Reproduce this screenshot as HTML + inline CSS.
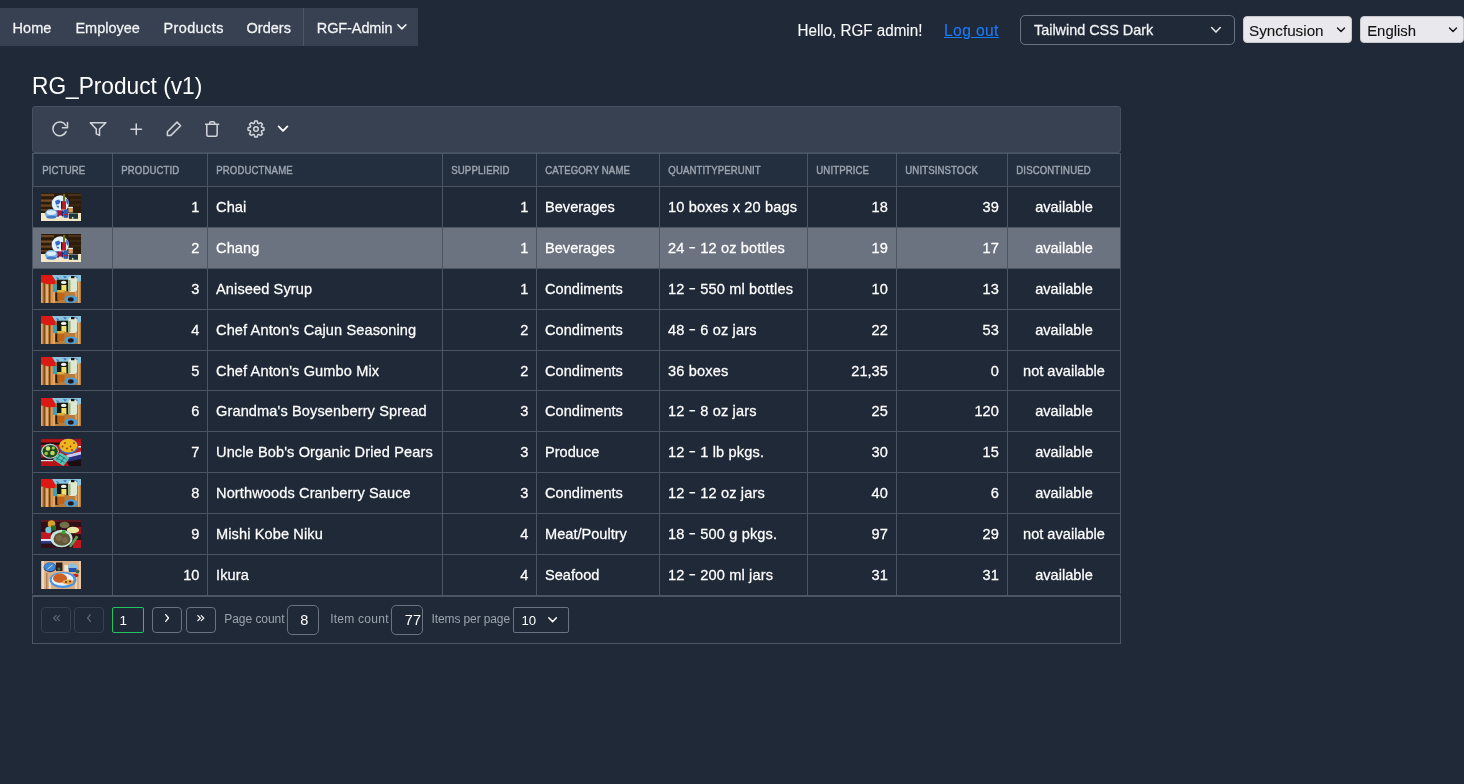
<!DOCTYPE html>
<html><head><meta charset="utf-8"><title>RG_Product</title>
<style>
html,body{margin:0;padding:0;}
body{width:1464px;height:784px;overflow:hidden;position:relative;background:#1f2937;font-family:'Liberation Sans', sans-serif;}
.t{-webkit-text-stroke:0.25px currentColor;}
.ns{-webkit-text-stroke:0;}
#root{position:absolute;left:0;top:0;width:1464px;height:784px;will-change:transform;}
</style></head><body>
<div id="root">
<div style="position:absolute;left:0px;top:8px;width:418px;height:38px;background:#374151;"></div>
<div style="position:absolute;left:303px;top:8px;width:1px;height:38px;background:#4b5563;"></div>
<div class="t" style="position:absolute;top:19.88px;font-family:'Liberation Sans', sans-serif;font-size:14.5px;color:#f3f4f6;font-weight:400;letter-spacing:0px;white-space:nowrap;line-height:16.197px;transform:scaleY(1.06);transform-origin:0 13.12px;left:12.6px;">Home</div>
<div class="t" style="position:absolute;top:19.88px;font-family:'Liberation Sans', sans-serif;font-size:14.5px;color:#f3f4f6;font-weight:400;letter-spacing:0px;white-space:nowrap;line-height:16.197px;transform:scaleY(1.06);transform-origin:0 13.12px;left:75.4px;">Employee</div>
<div class="t" style="position:absolute;top:19.88px;font-family:'Liberation Sans', sans-serif;font-size:14.5px;color:#f3f4f6;font-weight:400;letter-spacing:0.4px;white-space:nowrap;line-height:16.197px;transform:scaleY(1.06);transform-origin:0 13.12px;left:163.4px;">Products</div>
<div class="t" style="position:absolute;top:19.88px;font-family:'Liberation Sans', sans-serif;font-size:14.5px;color:#f3f4f6;font-weight:400;letter-spacing:0px;white-space:nowrap;line-height:16.197px;transform:scaleY(1.06);transform-origin:0 13.12px;left:246.6px;">Orders</div>
<div class="t" style="position:absolute;top:19.88px;font-family:'Liberation Sans', sans-serif;font-size:14.5px;color:#f3f4f6;font-weight:400;letter-spacing:-0.1px;white-space:nowrap;line-height:16.197px;transform:scaleY(1.06);transform-origin:0 13.12px;left:316.8px;">RGF-Admin</div>
<svg style="position:absolute;left:396.3px;top:22px;" width="12" height="10" viewBox="0 0 12 10"><path d="M1.9 2.8 L5.9 6.9 L9.9 2.8" fill="none" stroke="#f3f4f6" stroke-width="1.6" stroke-linecap="round" stroke-linejoin="round"/></svg>
<div class="t" style="position:absolute;top:22.04px;font-family:'Liberation Sans', sans-serif;font-size:15.2px;color:#f9fafb;font-weight:400;letter-spacing:0px;white-space:nowrap;line-height:16.978px;-webkit-text-stroke:0.1px currentColor;transform:scaleY(1.04);transform-origin:0 13.76px;left:797.5px;">Hello, RGF admin!</div>
<div class="t" style="position:absolute;top:22.38px;font-family:'Liberation Sans', sans-serif;font-size:15.6px;color:#1a7bff;font-weight:400;letter-spacing:0.4px;white-space:nowrap;line-height:17.425px;text-decoration:underline;text-underline-offset:1.2px;-webkit-text-stroke:0.1px currentColor;left:944px;">Log out</div>
<div style="position:absolute;left:1020px;top:15px;width:215px;height:30px;background:#1f2937;box-sizing:border-box;border:1px solid #6b7280;border-radius:5px;"></div>
<div class="t" style="position:absolute;top:21.97px;font-family:'Liberation Sans', sans-serif;font-size:14.4px;color:#f3f4f6;font-weight:400;letter-spacing:0px;white-space:nowrap;line-height:16.085px;transform:scaleY(1.04);transform-origin:0 13.03px;left:1034px;">Tailwind CSS Dark</div>
<svg style="position:absolute;left:1209px;top:24px;" width="14" height="12" viewBox="0 0 14 12"><path d="M2.6 3.6 L6.95 8.1 L11.3 3.6" fill="none" stroke="#e5e7eb" stroke-width="1.5" stroke-linecap="round" stroke-linejoin="round"/></svg>
<div style="position:absolute;left:1243px;top:16px;width:109px;height:27px;background:#e9e9ed;box-sizing:border-box;border:1px solid #c8c8cc;border-radius:4px;"></div>
<div class="t" style="position:absolute;top:21.80px;font-family:'Liberation Sans', sans-serif;font-size:15.25px;color:#111;font-weight:400;letter-spacing:0px;white-space:nowrap;line-height:17.034px;-webkit-text-stroke:0.1px currentColor;left:1249px;">Syncfusion</div>
<svg style="position:absolute;left:1336px;top:26px;" width="10" height="8" viewBox="0 0 10 8"><path d="M1.5 2 L5 5.5 L8.5 2" fill="none" stroke="#111" stroke-width="1.4" stroke-linecap="round" stroke-linejoin="round"/></svg>
<div style="position:absolute;left:1360px;top:16px;width:104px;height:27px;background:#e9e9ed;box-sizing:border-box;border:1px solid #c8c8cc;border-radius:4px;"></div>
<div class="t" style="position:absolute;top:22.72px;font-family:'Liberation Sans', sans-serif;font-size:14.9px;color:#111;font-weight:400;letter-spacing:0px;white-space:nowrap;line-height:16.643px;-webkit-text-stroke:0.1px currentColor;transform:scaleY(1.04);transform-origin:0 13.48px;left:1367.2px;">English</div>
<svg style="position:absolute;left:1448px;top:26px;" width="10" height="8" viewBox="0 0 10 8"><path d="M1.5 2 L5 5.5 L8.5 2" fill="none" stroke="#111" stroke-width="1.4" stroke-linecap="round" stroke-linejoin="round"/></svg>
<div class="t" style="position:absolute;top:74.36px;font-family:'Liberation Sans', sans-serif;font-size:22.7px;color:#ffffff;font-weight:400;letter-spacing:0px;white-space:nowrap;line-height:25.356px;transform:scaleY(1.05);transform-origin:0 20.54px;-webkit-text-stroke:0;left:32.0px;">RG_Product (v1)</div>
<div style="position:absolute;left:32px;top:106px;width:1089px;height:47px;background:#374151;box-sizing:border-box;border:1px solid #465061;border-radius:3px;"></div>
<svg style="position:absolute;left:48px;top:118px;" width="24" height="22" viewBox="0 0 24 22"><path d="M18.1 13.6 A6.9 6.9 0 1 1 17.9 7.6" fill="none" stroke="#d1d5db" stroke-width="1.5" stroke-linecap="round" stroke-linejoin="round"/><path d="M19.5 4.5 L19.5 9.7 L14.4 9.7" fill="none" stroke="#d1d5db" stroke-width="1.5" stroke-linecap="round" stroke-linejoin="round"/></svg>
<svg style="position:absolute;left:86px;top:117px;" width="24" height="24" viewBox="0 0 24 24"><path d="M4.3 5.7 L19.9 5.7 L13.5 12 L13.5 18.4 L10.25 16.8 L10.25 12 Z" fill="none" stroke="#d1d5db" stroke-width="1.5" stroke-linecap="round" stroke-linejoin="round"/></svg>
<svg style="position:absolute;left:129px;top:122px;" width="14" height="14" viewBox="0 0 14 14"><path d="M7.25 1.9 L7.25 12.4 M2 7.15 L12.5 7.15" fill="none" stroke="#d1d5db" stroke-width="1.5" stroke-linecap="round" stroke-linejoin="round"/></svg>
<svg style="position:absolute;left:162px;top:117px;" width="24" height="24" viewBox="0 0 24 24"><path d="M5.4 18.4 L5.4 14.7 L15.0 5.1 L18.6 8.7 L8.9 18.4 Z" fill="none" stroke="#d1d5db" stroke-width="1.5" stroke-linecap="round" stroke-linejoin="round"/></svg>
<svg style="position:absolute;left:203px;top:119px;" width="18" height="20" viewBox="0 0 18 20"><path d="M2.6 5.3 L15.7 5.3 M6.7 5.3 L6.7 4.0 Q6.7 2.75 7.95 2.75 L10.4 2.75 Q11.65 2.75 11.65 4.0 L11.65 5.3 M3.8 5.3 L3.8 15.8 Q3.8 17.25 5.25 17.25 L12.7 17.25 Q14.15 17.25 14.15 15.8 L14.15 5.3" fill="none" stroke="#d1d5db" stroke-width="1.5" stroke-linecap="round" stroke-linejoin="round"/></svg>
<svg style="position:absolute;left:244px;top:117px;" width="24" height="24" viewBox="0 0 24 24"><path d="M10.25 6.26 L10.75 4.10 A8.0 8.0 0 0 1 13.25 4.10 L13.75 6.26 A6.0 6.0 0 0 1 14.82 6.70 L16.70 5.53 A8.0 8.0 0 0 1 18.47 7.30 L17.30 9.18 A6.0 6.0 0 0 1 17.74 10.25 L19.90 10.75 A8.0 8.0 0 0 1 19.90 13.25 L17.74 13.75 A6.0 6.0 0 0 1 17.30 14.82 L18.47 16.70 A8.0 8.0 0 0 1 16.70 18.47 L14.82 17.30 A6.0 6.0 0 0 1 13.75 17.74 L13.25 19.90 A8.0 8.0 0 0 1 10.75 19.90 L10.25 17.74 A6.0 6.0 0 0 1 9.18 17.30 L7.30 18.47 A8.0 8.0 0 0 1 5.53 16.70 L6.70 14.82 A6.0 6.0 0 0 1 6.26 13.75 L4.10 13.25 A8.0 8.0 0 0 1 4.10 10.75 L6.26 10.25 A6.0 6.0 0 0 1 6.70 9.18 L5.53 7.30 A8.0 8.0 0 0 1 7.30 5.53 L9.18 6.70 A6.0 6.0 0 0 1 10.25 6.26 Z" fill="none" stroke="#d1d5db" stroke-width="1.5" stroke-linecap="round" stroke-linejoin="round"/><circle cx="12" cy="12" r="2.3" fill="none" stroke="#d1d5db" stroke-width="1.5" stroke-linecap="round" stroke-linejoin="round"/></svg>
<svg style="position:absolute;left:276px;top:123px;" width="14" height="12" viewBox="0 0 14 12"><path d="M2.6 3.4 L7 7.8 L11.4 3.4" fill="none" stroke="#ffffff" stroke-width="1.8" stroke-linecap="round" stroke-linejoin="round"/></svg>
<div style="position:absolute;left:33px;top:153px;width:1088px;height:33px;background:#232e3e;"></div>
<div style="position:absolute;left:33px;top:187px;width:1088px;height:40px;background:#1f2937;"></div>
<div style="position:absolute;left:33px;top:228px;width:1088px;height:40px;background:#6b7280;"></div>
<div style="position:absolute;left:33px;top:269px;width:1088px;height:40px;background:#1f2937;"></div>
<div style="position:absolute;left:33px;top:310px;width:1088px;height:40px;background:#1f2937;"></div>
<div style="position:absolute;left:33px;top:351px;width:1088px;height:39px;background:#1f2937;"></div>
<div style="position:absolute;left:33px;top:391px;width:1088px;height:40px;background:#1f2937;"></div>
<div style="position:absolute;left:33px;top:432px;width:1088px;height:40px;background:#1f2937;"></div>
<div style="position:absolute;left:33px;top:473px;width:1088px;height:40px;background:#1f2937;"></div>
<div style="position:absolute;left:33px;top:514px;width:1088px;height:40px;background:#1f2937;"></div>
<div style="position:absolute;left:33px;top:555px;width:1088px;height:40px;background:#1f2937;"></div>
<div style="position:absolute;left:33px;top:596px;width:1088px;height:48px;background:#1f2937;"></div>
<div style="position:absolute;left:32px;top:153px;width:1089px;height:1px;background:#4b5563;"></div>
<div style="position:absolute;left:32px;top:186px;width:1089px;height:1px;background:#4b5563;"></div>
<div style="position:absolute;left:32px;top:227px;width:1089px;height:1px;background:#4b5563;"></div>
<div style="position:absolute;left:32px;top:268px;width:1089px;height:1px;background:#4b5563;"></div>
<div style="position:absolute;left:32px;top:309px;width:1089px;height:1px;background:#4b5563;"></div>
<div style="position:absolute;left:32px;top:350px;width:1089px;height:1px;background:#4b5563;"></div>
<div style="position:absolute;left:32px;top:390px;width:1089px;height:1px;background:#4b5563;"></div>
<div style="position:absolute;left:32px;top:431px;width:1089px;height:1px;background:#4b5563;"></div>
<div style="position:absolute;left:32px;top:472px;width:1089px;height:1px;background:#4b5563;"></div>
<div style="position:absolute;left:32px;top:513px;width:1089px;height:1px;background:#4b5563;"></div>
<div style="position:absolute;left:32px;top:554px;width:1089px;height:1px;background:#4b5563;"></div>
<div style="position:absolute;left:32px;top:595px;width:1089px;height:2px;background:#4b5563;"></div>
<div style="position:absolute;left:32px;top:643px;width:1089px;height:1px;background:#4b5563;"></div>
<div style="position:absolute;left:32px;top:153px;width:1px;height:441px;background:#4b5563;"></div>
<div style="position:absolute;left:33px;top:154px;width:1px;height:32px;background:rgba(75,85,99,0.5);"></div>
<div style="position:absolute;left:32px;top:597px;width:1px;height:46px;background:#4b5563;"></div>
<div style="position:absolute;left:112px;top:153px;width:1px;height:443px;background:#4b5563;"></div>
<div style="position:absolute;left:207px;top:153px;width:1px;height:443px;background:#4b5563;"></div>
<div style="position:absolute;left:442px;top:153px;width:1px;height:443px;background:#4b5563;"></div>
<div style="position:absolute;left:536px;top:153px;width:1px;height:443px;background:#4b5563;"></div>
<div style="position:absolute;left:659px;top:153px;width:1px;height:443px;background:#4b5563;"></div>
<div style="position:absolute;left:807px;top:153px;width:1px;height:443px;background:#4b5563;"></div>
<div style="position:absolute;left:896px;top:153px;width:1px;height:443px;background:#4b5563;"></div>
<div style="position:absolute;left:1007px;top:153px;width:1px;height:443px;background:#4b5563;"></div>
<div style="position:absolute;left:1120px;top:153px;width:1px;height:441px;background:#4b5563;"></div>
<div style="position:absolute;left:1120px;top:597px;width:1px;height:46px;background:#4b5563;"></div>
<div class="t" style="position:absolute;top:165.91px;font-family:'Liberation Sans', sans-serif;font-size:9.6px;color:#9ca3af;font-weight:400;letter-spacing:0.12px;white-space:nowrap;line-height:10.723px;-webkit-text-stroke:0.4px currentColor;transform:scaleY(1.12);transform-origin:0 8.69px;left:42.3px;">PICTURE</div>
<div class="t" style="position:absolute;top:165.91px;font-family:'Liberation Sans', sans-serif;font-size:9.6px;color:#9ca3af;font-weight:400;letter-spacing:0.12px;white-space:nowrap;line-height:10.723px;-webkit-text-stroke:0.4px currentColor;transform:scaleY(1.12);transform-origin:0 8.69px;left:121.3px;">PRODUCTID</div>
<div class="t" style="position:absolute;top:165.91px;font-family:'Liberation Sans', sans-serif;font-size:9.6px;color:#9ca3af;font-weight:400;letter-spacing:0.12px;white-space:nowrap;line-height:10.723px;-webkit-text-stroke:0.4px currentColor;transform:scaleY(1.12);transform-origin:0 8.69px;left:216.3px;">PRODUCTNAME</div>
<div class="t" style="position:absolute;top:165.91px;font-family:'Liberation Sans', sans-serif;font-size:9.6px;color:#9ca3af;font-weight:400;letter-spacing:0.12px;white-space:nowrap;line-height:10.723px;-webkit-text-stroke:0.4px currentColor;transform:scaleY(1.12);transform-origin:0 8.69px;left:451.3px;">SUPPLIERID</div>
<div class="t" style="position:absolute;top:165.91px;font-family:'Liberation Sans', sans-serif;font-size:9.6px;color:#9ca3af;font-weight:400;letter-spacing:0.12px;white-space:nowrap;line-height:10.723px;-webkit-text-stroke:0.4px currentColor;transform:scaleY(1.12);transform-origin:0 8.69px;left:545.3px;">CATEGORY NAME</div>
<div class="t" style="position:absolute;top:165.91px;font-family:'Liberation Sans', sans-serif;font-size:9.6px;color:#9ca3af;font-weight:400;letter-spacing:0.12px;white-space:nowrap;line-height:10.723px;-webkit-text-stroke:0.4px currentColor;transform:scaleY(1.12);transform-origin:0 8.69px;left:668.3px;">QUANTITYPERUNIT</div>
<div class="t" style="position:absolute;top:165.91px;font-family:'Liberation Sans', sans-serif;font-size:9.6px;color:#9ca3af;font-weight:400;letter-spacing:0.12px;white-space:nowrap;line-height:10.723px;-webkit-text-stroke:0.4px currentColor;transform:scaleY(1.12);transform-origin:0 8.69px;left:816.3px;">UNITPRICE</div>
<div class="t" style="position:absolute;top:165.91px;font-family:'Liberation Sans', sans-serif;font-size:9.6px;color:#9ca3af;font-weight:400;letter-spacing:0.12px;white-space:nowrap;line-height:10.723px;-webkit-text-stroke:0.4px currentColor;transform:scaleY(1.12);transform-origin:0 8.69px;left:905.3px;">UNITSINSTOCK</div>
<div class="t" style="position:absolute;top:165.91px;font-family:'Liberation Sans', sans-serif;font-size:9.6px;color:#9ca3af;font-weight:400;letter-spacing:0.12px;white-space:nowrap;line-height:10.723px;-webkit-text-stroke:0.4px currentColor;transform:scaleY(1.12);transform-origin:0 8.69px;left:1016.3px;">DISCONTINUED</div>
<svg style="position:absolute;left:41px;top:193px;filter:blur(0.35px);" width="40" height="28" viewBox="0 0 40 28"><rect width="40" height="28" fill="#2c1c0c"/>
<rect y="1" width="13" height="2.2" fill="#6a4620"/><rect y="6.5" width="12" height="2.2" fill="#74502a"/><rect y="11.5" width="11" height="2.2" fill="#6a4620"/><rect y="16" width="9" height="2" fill="#5a3a18"/>
<rect x="27" y="1" width="13" height="2" fill="#4a3218"/><rect x="29" y="6" width="11" height="1.8" fill="#3a2a14"/><rect x="30" y="11" width="10" height="1.8" fill="#3a2812"/>
<rect y="20" width="40" height="8" fill="#f2e8c8"/>
<circle cx="19.3" cy="10.8" r="8.6" fill="#e2f2f8"/>
<path d="M14 8 l3.5 -1.4 l2.2 1.6 l-1.6 2.8 l-3 0.8 z M15 12.5 l3.2 0.4 l-1 2.4 z M25 5.5 l2.8 2.8 l-0.6 3.6 l-1.8 -2z" fill="#3668cc"/>
<rect x="22" y="0.9" width="2.2" height="8.2" fill="#6c7424"/>
<rect x="20" y="8.2" width="5" height="8.4" fill="#c01c28"/><rect x="20" y="8.2" width="1.3" height="7" fill="#2a2018"/>
<rect x="27.3" y="13.9" width="4.6" height="5.6" fill="#cc9c5c"/><rect x="27.3" y="13.9" width="4.6" height="1.1" fill="#e8f2f2"/>
<rect x="14" y="17.4" width="4" height="6.2" fill="#2434a0"/><rect x="17" y="17.4" width="4" height="5.2" fill="#ac1630"/><rect x="20.8" y="17.4" width="1.8" height="6" fill="#1a2a78"/>
<rect x="22.7" y="16.6" width="4.6" height="8.2" fill="#2c5cb0"/><rect x="22.7" y="21" width="4.6" height="1.2" fill="#b02030"/>
<ellipse cx="10.3" cy="20.8" rx="6.4" ry="4.8" fill="#78b0e4"/><ellipse cx="10.3" cy="19.6" rx="4.8" ry="2.4" fill="#dcecf6"/><ellipse cx="10.3" cy="24" rx="5" ry="1.6" fill="#4678c4"/>
<rect x="28" y="20.4" width="9" height="5.4" fill="#1c3640"/><rect x="31" y="23.9" width="1.4" height="1.9" fill="#e4d888"/></svg>
<div class="t" style="position:absolute;top:199.19px;font-family:'Liberation Sans', sans-serif;font-size:14.6px;color:#ffffff;font-weight:400;letter-spacing:0px;white-space:nowrap;line-height:16.308px;transform:scaleY(1.05);transform-origin:0 13.21px;right:1264.6px;text-align:right;">1</div>
<div class="t" style="position:absolute;top:199.19px;font-family:'Liberation Sans', sans-serif;font-size:14.6px;color:#ffffff;font-weight:400;letter-spacing:0.1px;white-space:nowrap;line-height:16.308px;transform:scaleY(1.05);transform-origin:0 13.21px;left:216px;">Chai</div>
<div class="t" style="position:absolute;top:199.19px;font-family:'Liberation Sans', sans-serif;font-size:14.6px;color:#ffffff;font-weight:400;letter-spacing:0px;white-space:nowrap;line-height:16.308px;transform:scaleY(1.05);transform-origin:0 13.21px;right:935.6px;text-align:right;">1</div>
<div class="t" style="position:absolute;top:199.19px;font-family:'Liberation Sans', sans-serif;font-size:14.6px;color:#ffffff;font-weight:400;letter-spacing:0px;white-space:nowrap;line-height:16.308px;transform:scaleY(1.05);transform-origin:0 13.21px;left:545px;">Beverages</div>
<div class="t" style="position:absolute;top:199.19px;font-family:'Liberation Sans', sans-serif;font-size:14.6px;color:#ffffff;font-weight:400;letter-spacing:0.15px;white-space:nowrap;line-height:16.308px;transform:scaleY(1.05);transform-origin:0 13.21px;left:668px;">10 boxes x 20 bags</div>
<div class="t" style="position:absolute;top:199.19px;font-family:'Liberation Sans', sans-serif;font-size:14.6px;color:#ffffff;font-weight:400;letter-spacing:0px;white-space:nowrap;line-height:16.308px;transform:scaleY(1.05);transform-origin:0 13.21px;right:576.2px;text-align:right;">18</div>
<div class="t" style="position:absolute;top:199.19px;font-family:'Liberation Sans', sans-serif;font-size:14.6px;color:#ffffff;font-weight:400;letter-spacing:0px;white-space:nowrap;line-height:16.308px;transform:scaleY(1.05);transform-origin:0 13.21px;right:465.20000000000005px;text-align:right;">39</div>
<div class="t" style="position:absolute;top:199.19px;font-family:'Liberation Sans', sans-serif;font-size:14.6px;color:#ffffff;font-weight:400;letter-spacing:0px;white-space:nowrap;line-height:16.308px;transform:scaleY(1.05);transform-origin:0 13.21px;left:764.0px;width:600px;text-align:center;">available</div>
<svg style="position:absolute;left:41px;top:234px;filter:blur(0.35px);" width="40" height="28" viewBox="0 0 40 28"><rect width="40" height="28" fill="#2c1c0c"/>
<rect y="1" width="13" height="2.2" fill="#6a4620"/><rect y="6.5" width="12" height="2.2" fill="#74502a"/><rect y="11.5" width="11" height="2.2" fill="#6a4620"/><rect y="16" width="9" height="2" fill="#5a3a18"/>
<rect x="27" y="1" width="13" height="2" fill="#4a3218"/><rect x="29" y="6" width="11" height="1.8" fill="#3a2a14"/><rect x="30" y="11" width="10" height="1.8" fill="#3a2812"/>
<rect y="20" width="40" height="8" fill="#f2e8c8"/>
<circle cx="19.3" cy="10.8" r="8.6" fill="#e2f2f8"/>
<path d="M14 8 l3.5 -1.4 l2.2 1.6 l-1.6 2.8 l-3 0.8 z M15 12.5 l3.2 0.4 l-1 2.4 z M25 5.5 l2.8 2.8 l-0.6 3.6 l-1.8 -2z" fill="#3668cc"/>
<rect x="22" y="0.9" width="2.2" height="8.2" fill="#6c7424"/>
<rect x="20" y="8.2" width="5" height="8.4" fill="#c01c28"/><rect x="20" y="8.2" width="1.3" height="7" fill="#2a2018"/>
<rect x="27.3" y="13.9" width="4.6" height="5.6" fill="#cc9c5c"/><rect x="27.3" y="13.9" width="4.6" height="1.1" fill="#e8f2f2"/>
<rect x="14" y="17.4" width="4" height="6.2" fill="#2434a0"/><rect x="17" y="17.4" width="4" height="5.2" fill="#ac1630"/><rect x="20.8" y="17.4" width="1.8" height="6" fill="#1a2a78"/>
<rect x="22.7" y="16.6" width="4.6" height="8.2" fill="#2c5cb0"/><rect x="22.7" y="21" width="4.6" height="1.2" fill="#b02030"/>
<ellipse cx="10.3" cy="20.8" rx="6.4" ry="4.8" fill="#78b0e4"/><ellipse cx="10.3" cy="19.6" rx="4.8" ry="2.4" fill="#dcecf6"/><ellipse cx="10.3" cy="24" rx="5" ry="1.6" fill="#4678c4"/>
<rect x="28" y="20.4" width="9" height="5.4" fill="#1c3640"/><rect x="31" y="23.9" width="1.4" height="1.9" fill="#e4d888"/></svg>
<div class="t" style="position:absolute;top:240.05px;font-family:'Liberation Sans', sans-serif;font-size:14.6px;color:#ffffff;font-weight:400;letter-spacing:0px;white-space:nowrap;line-height:16.308px;transform:scaleY(1.05);transform-origin:0 13.21px;right:1264.6px;text-align:right;">2</div>
<div class="t" style="position:absolute;top:240.05px;font-family:'Liberation Sans', sans-serif;font-size:14.6px;color:#ffffff;font-weight:400;letter-spacing:0.1px;white-space:nowrap;line-height:16.308px;transform:scaleY(1.05);transform-origin:0 13.21px;left:216px;">Chang</div>
<div class="t" style="position:absolute;top:240.05px;font-family:'Liberation Sans', sans-serif;font-size:14.6px;color:#ffffff;font-weight:400;letter-spacing:0px;white-space:nowrap;line-height:16.308px;transform:scaleY(1.05);transform-origin:0 13.21px;right:935.6px;text-align:right;">1</div>
<div class="t" style="position:absolute;top:240.05px;font-family:'Liberation Sans', sans-serif;font-size:14.6px;color:#ffffff;font-weight:400;letter-spacing:0px;white-space:nowrap;line-height:16.308px;transform:scaleY(1.05);transform-origin:0 13.21px;left:545px;">Beverages</div>
<div class="t" style="position:absolute;top:240.05px;font-family:'Liberation Sans', sans-serif;font-size:14.6px;color:#ffffff;font-weight:400;letter-spacing:0.15px;white-space:nowrap;line-height:16.308px;transform:scaleY(1.05);transform-origin:0 13.21px;left:668px;">24 <span style="display:inline-block;transform:scaleX(1.45) translateY(-0.5px);margin:0 1.1px">-</span> 12 oz bottles</div>
<div class="t" style="position:absolute;top:240.05px;font-family:'Liberation Sans', sans-serif;font-size:14.6px;color:#ffffff;font-weight:400;letter-spacing:0px;white-space:nowrap;line-height:16.308px;transform:scaleY(1.05);transform-origin:0 13.21px;right:576.2px;text-align:right;">19</div>
<div class="t" style="position:absolute;top:240.05px;font-family:'Liberation Sans', sans-serif;font-size:14.6px;color:#ffffff;font-weight:400;letter-spacing:0px;white-space:nowrap;line-height:16.308px;transform:scaleY(1.05);transform-origin:0 13.21px;right:465.20000000000005px;text-align:right;">17</div>
<div class="t" style="position:absolute;top:240.05px;font-family:'Liberation Sans', sans-serif;font-size:14.6px;color:#ffffff;font-weight:400;letter-spacing:0px;white-space:nowrap;line-height:16.308px;transform:scaleY(1.05);transform-origin:0 13.21px;left:764.0px;width:600px;text-align:center;">available</div>
<svg style="position:absolute;left:41px;top:275px;filter:blur(0.35px);" width="40" height="28" viewBox="0 0 40 28"><rect width="40" height="28" fill="#b87c3c"/>
<rect x="0" y="8" width="1.5" height="20" fill="#e0a868"/><rect x="2.5" y="8" width="1.5" height="20" fill="#7a4c20"/><rect x="5" y="9" width="2" height="19" fill="#e8b070"/><rect x="8" y="9" width="1.2" height="19" fill="#6a4018"/><rect x="10" y="9" width="1.8" height="19" fill="#d89a58"/>
<rect x="12" y="17" width="2" height="11" fill="#e0a868"/><rect x="37" y="6" width="1.5" height="22" fill="#e0b070"/><rect x="34" y="17" width="2" height="5" fill="#d8a060"/>
<path d="M0 0 L14.5 0 L14.5 9 L6 9.2 L0 7z" fill="#dc1a14"/>
<path d="M11 0 L40 0 L40 6 L36 6.8 L28 7 L20 7.2 L14 5z" fill="#8cc4e0"/>
<path d="M15 2 l3 1 l-1 2z M22 1 l4 0.6 l-2 2z M33 1 l4 1 l-2 2z M27 4 l3 0 l-1 2z" fill="#3c78b8"/>
<rect x="15.8" y="4.7" width="11.5" height="11.5" fill="#141a10"/>
<rect x="12" y="9.3" width="3.8" height="7.7" fill="#3aa0c0"/>
<ellipse cx="22.7" cy="7.4" rx="2.8" ry="1.6" fill="#f0f0ee"/>
<rect x="20.4" y="10" width="5" height="6.2" fill="#f0e070"/>
<rect x="14.3" y="17.4" width="3" height="8.4" fill="#2a1a10"/>
<rect x="16.2" y="15" width="7.3" height="10" fill="#c06418"/><rect x="16.2" y="15" width="7.3" height="2.5" fill="#d8b040"/>
<rect x="27.3" y="1.7" width="8.7" height="15.3" rx="2.5" fill="#dfe8d0"/><rect x="27.3" y="5" width="2.2" height="11" fill="#98b080"/><rect x="30" y="0.9" width="3.4" height="2.3" fill="#161616"/>
<ellipse cx="30" cy="24.2" rx="6.5" ry="3.8" fill="#4aa0d8"/><ellipse cx="29.8" cy="24.4" rx="2.9" ry="2.1" fill="#2a1414"/></svg>
<div class="t" style="position:absolute;top:280.91px;font-family:'Liberation Sans', sans-serif;font-size:14.6px;color:#ffffff;font-weight:400;letter-spacing:0px;white-space:nowrap;line-height:16.308px;transform:scaleY(1.05);transform-origin:0 13.21px;right:1264.6px;text-align:right;">3</div>
<div class="t" style="position:absolute;top:280.91px;font-family:'Liberation Sans', sans-serif;font-size:14.6px;color:#ffffff;font-weight:400;letter-spacing:0.1px;white-space:nowrap;line-height:16.308px;transform:scaleY(1.05);transform-origin:0 13.21px;left:216px;">Aniseed Syrup</div>
<div class="t" style="position:absolute;top:280.91px;font-family:'Liberation Sans', sans-serif;font-size:14.6px;color:#ffffff;font-weight:400;letter-spacing:0px;white-space:nowrap;line-height:16.308px;transform:scaleY(1.05);transform-origin:0 13.21px;right:935.6px;text-align:right;">1</div>
<div class="t" style="position:absolute;top:280.91px;font-family:'Liberation Sans', sans-serif;font-size:14.6px;color:#ffffff;font-weight:400;letter-spacing:0px;white-space:nowrap;line-height:16.308px;transform:scaleY(1.05);transform-origin:0 13.21px;left:545px;">Condiments</div>
<div class="t" style="position:absolute;top:280.91px;font-family:'Liberation Sans', sans-serif;font-size:14.6px;color:#ffffff;font-weight:400;letter-spacing:0.15px;white-space:nowrap;line-height:16.308px;transform:scaleY(1.05);transform-origin:0 13.21px;left:668px;">12 <span style="display:inline-block;transform:scaleX(1.45) translateY(-0.5px);margin:0 1.1px">-</span> 550 ml bottles</div>
<div class="t" style="position:absolute;top:280.91px;font-family:'Liberation Sans', sans-serif;font-size:14.6px;color:#ffffff;font-weight:400;letter-spacing:0px;white-space:nowrap;line-height:16.308px;transform:scaleY(1.05);transform-origin:0 13.21px;right:576.2px;text-align:right;">10</div>
<div class="t" style="position:absolute;top:280.91px;font-family:'Liberation Sans', sans-serif;font-size:14.6px;color:#ffffff;font-weight:400;letter-spacing:0px;white-space:nowrap;line-height:16.308px;transform:scaleY(1.05);transform-origin:0 13.21px;right:465.20000000000005px;text-align:right;">13</div>
<div class="t" style="position:absolute;top:280.91px;font-family:'Liberation Sans', sans-serif;font-size:14.6px;color:#ffffff;font-weight:400;letter-spacing:0px;white-space:nowrap;line-height:16.308px;transform:scaleY(1.05);transform-origin:0 13.21px;left:764.0px;width:600px;text-align:center;">available</div>
<svg style="position:absolute;left:41px;top:316px;filter:blur(0.35px);" width="40" height="28" viewBox="0 0 40 28"><rect width="40" height="28" fill="#b87c3c"/>
<rect x="0" y="8" width="1.5" height="20" fill="#e0a868"/><rect x="2.5" y="8" width="1.5" height="20" fill="#7a4c20"/><rect x="5" y="9" width="2" height="19" fill="#e8b070"/><rect x="8" y="9" width="1.2" height="19" fill="#6a4018"/><rect x="10" y="9" width="1.8" height="19" fill="#d89a58"/>
<rect x="12" y="17" width="2" height="11" fill="#e0a868"/><rect x="37" y="6" width="1.5" height="22" fill="#e0b070"/><rect x="34" y="17" width="2" height="5" fill="#d8a060"/>
<path d="M0 0 L14.5 0 L14.5 9 L6 9.2 L0 7z" fill="#dc1a14"/>
<path d="M11 0 L40 0 L40 6 L36 6.8 L28 7 L20 7.2 L14 5z" fill="#8cc4e0"/>
<path d="M15 2 l3 1 l-1 2z M22 1 l4 0.6 l-2 2z M33 1 l4 1 l-2 2z M27 4 l3 0 l-1 2z" fill="#3c78b8"/>
<rect x="15.8" y="4.7" width="11.5" height="11.5" fill="#141a10"/>
<rect x="12" y="9.3" width="3.8" height="7.7" fill="#3aa0c0"/>
<ellipse cx="22.7" cy="7.4" rx="2.8" ry="1.6" fill="#f0f0ee"/>
<rect x="20.4" y="10" width="5" height="6.2" fill="#f0e070"/>
<rect x="14.3" y="17.4" width="3" height="8.4" fill="#2a1a10"/>
<rect x="16.2" y="15" width="7.3" height="10" fill="#c06418"/><rect x="16.2" y="15" width="7.3" height="2.5" fill="#d8b040"/>
<rect x="27.3" y="1.7" width="8.7" height="15.3" rx="2.5" fill="#dfe8d0"/><rect x="27.3" y="5" width="2.2" height="11" fill="#98b080"/><rect x="30" y="0.9" width="3.4" height="2.3" fill="#161616"/>
<ellipse cx="30" cy="24.2" rx="6.5" ry="3.8" fill="#4aa0d8"/><ellipse cx="29.8" cy="24.4" rx="2.9" ry="2.1" fill="#2a1414"/></svg>
<div class="t" style="position:absolute;top:321.77px;font-family:'Liberation Sans', sans-serif;font-size:14.6px;color:#ffffff;font-weight:400;letter-spacing:0px;white-space:nowrap;line-height:16.308px;transform:scaleY(1.05);transform-origin:0 13.21px;right:1264.6px;text-align:right;">4</div>
<div class="t" style="position:absolute;top:321.77px;font-family:'Liberation Sans', sans-serif;font-size:14.6px;color:#ffffff;font-weight:400;letter-spacing:0.1px;white-space:nowrap;line-height:16.308px;transform:scaleY(1.05);transform-origin:0 13.21px;left:216px;">Chef Anton's Cajun Seasoning</div>
<div class="t" style="position:absolute;top:321.77px;font-family:'Liberation Sans', sans-serif;font-size:14.6px;color:#ffffff;font-weight:400;letter-spacing:0px;white-space:nowrap;line-height:16.308px;transform:scaleY(1.05);transform-origin:0 13.21px;right:935.6px;text-align:right;">2</div>
<div class="t" style="position:absolute;top:321.77px;font-family:'Liberation Sans', sans-serif;font-size:14.6px;color:#ffffff;font-weight:400;letter-spacing:0px;white-space:nowrap;line-height:16.308px;transform:scaleY(1.05);transform-origin:0 13.21px;left:545px;">Condiments</div>
<div class="t" style="position:absolute;top:321.77px;font-family:'Liberation Sans', sans-serif;font-size:14.6px;color:#ffffff;font-weight:400;letter-spacing:0.15px;white-space:nowrap;line-height:16.308px;transform:scaleY(1.05);transform-origin:0 13.21px;left:668px;">48 <span style="display:inline-block;transform:scaleX(1.45) translateY(-0.5px);margin:0 1.1px">-</span> 6 oz jars</div>
<div class="t" style="position:absolute;top:321.77px;font-family:'Liberation Sans', sans-serif;font-size:14.6px;color:#ffffff;font-weight:400;letter-spacing:0px;white-space:nowrap;line-height:16.308px;transform:scaleY(1.05);transform-origin:0 13.21px;right:576.2px;text-align:right;">22</div>
<div class="t" style="position:absolute;top:321.77px;font-family:'Liberation Sans', sans-serif;font-size:14.6px;color:#ffffff;font-weight:400;letter-spacing:0px;white-space:nowrap;line-height:16.308px;transform:scaleY(1.05);transform-origin:0 13.21px;right:465.20000000000005px;text-align:right;">53</div>
<div class="t" style="position:absolute;top:321.77px;font-family:'Liberation Sans', sans-serif;font-size:14.6px;color:#ffffff;font-weight:400;letter-spacing:0px;white-space:nowrap;line-height:16.308px;transform:scaleY(1.05);transform-origin:0 13.21px;left:764.0px;width:600px;text-align:center;">available</div>
<svg style="position:absolute;left:41px;top:357px;filter:blur(0.35px);" width="40" height="28" viewBox="0 0 40 28"><rect width="40" height="28" fill="#b87c3c"/>
<rect x="0" y="8" width="1.5" height="20" fill="#e0a868"/><rect x="2.5" y="8" width="1.5" height="20" fill="#7a4c20"/><rect x="5" y="9" width="2" height="19" fill="#e8b070"/><rect x="8" y="9" width="1.2" height="19" fill="#6a4018"/><rect x="10" y="9" width="1.8" height="19" fill="#d89a58"/>
<rect x="12" y="17" width="2" height="11" fill="#e0a868"/><rect x="37" y="6" width="1.5" height="22" fill="#e0b070"/><rect x="34" y="17" width="2" height="5" fill="#d8a060"/>
<path d="M0 0 L14.5 0 L14.5 9 L6 9.2 L0 7z" fill="#dc1a14"/>
<path d="M11 0 L40 0 L40 6 L36 6.8 L28 7 L20 7.2 L14 5z" fill="#8cc4e0"/>
<path d="M15 2 l3 1 l-1 2z M22 1 l4 0.6 l-2 2z M33 1 l4 1 l-2 2z M27 4 l3 0 l-1 2z" fill="#3c78b8"/>
<rect x="15.8" y="4.7" width="11.5" height="11.5" fill="#141a10"/>
<rect x="12" y="9.3" width="3.8" height="7.7" fill="#3aa0c0"/>
<ellipse cx="22.7" cy="7.4" rx="2.8" ry="1.6" fill="#f0f0ee"/>
<rect x="20.4" y="10" width="5" height="6.2" fill="#f0e070"/>
<rect x="14.3" y="17.4" width="3" height="8.4" fill="#2a1a10"/>
<rect x="16.2" y="15" width="7.3" height="10" fill="#c06418"/><rect x="16.2" y="15" width="7.3" height="2.5" fill="#d8b040"/>
<rect x="27.3" y="1.7" width="8.7" height="15.3" rx="2.5" fill="#dfe8d0"/><rect x="27.3" y="5" width="2.2" height="11" fill="#98b080"/><rect x="30" y="0.9" width="3.4" height="2.3" fill="#161616"/>
<ellipse cx="30" cy="24.2" rx="6.5" ry="3.8" fill="#4aa0d8"/><ellipse cx="29.8" cy="24.4" rx="2.9" ry="2.1" fill="#2a1414"/></svg>
<div class="t" style="position:absolute;top:362.63px;font-family:'Liberation Sans', sans-serif;font-size:14.6px;color:#ffffff;font-weight:400;letter-spacing:0px;white-space:nowrap;line-height:16.308px;transform:scaleY(1.05);transform-origin:0 13.21px;right:1264.6px;text-align:right;">5</div>
<div class="t" style="position:absolute;top:362.63px;font-family:'Liberation Sans', sans-serif;font-size:14.6px;color:#ffffff;font-weight:400;letter-spacing:0.1px;white-space:nowrap;line-height:16.308px;transform:scaleY(1.05);transform-origin:0 13.21px;left:216px;">Chef Anton's Gumbo Mix</div>
<div class="t" style="position:absolute;top:362.63px;font-family:'Liberation Sans', sans-serif;font-size:14.6px;color:#ffffff;font-weight:400;letter-spacing:0px;white-space:nowrap;line-height:16.308px;transform:scaleY(1.05);transform-origin:0 13.21px;right:935.6px;text-align:right;">2</div>
<div class="t" style="position:absolute;top:362.63px;font-family:'Liberation Sans', sans-serif;font-size:14.6px;color:#ffffff;font-weight:400;letter-spacing:0px;white-space:nowrap;line-height:16.308px;transform:scaleY(1.05);transform-origin:0 13.21px;left:545px;">Condiments</div>
<div class="t" style="position:absolute;top:362.63px;font-family:'Liberation Sans', sans-serif;font-size:14.6px;color:#ffffff;font-weight:400;letter-spacing:0.15px;white-space:nowrap;line-height:16.308px;transform:scaleY(1.05);transform-origin:0 13.21px;left:668px;">36 boxes</div>
<div class="t" style="position:absolute;top:362.63px;font-family:'Liberation Sans', sans-serif;font-size:14.6px;color:#ffffff;font-weight:400;letter-spacing:0px;white-space:nowrap;line-height:16.308px;transform:scaleY(1.05);transform-origin:0 13.21px;right:576.2px;text-align:right;">21,35</div>
<div class="t" style="position:absolute;top:362.63px;font-family:'Liberation Sans', sans-serif;font-size:14.6px;color:#ffffff;font-weight:400;letter-spacing:0px;white-space:nowrap;line-height:16.308px;transform:scaleY(1.05);transform-origin:0 13.21px;right:465.20000000000005px;text-align:right;">0</div>
<div class="t" style="position:absolute;top:362.63px;font-family:'Liberation Sans', sans-serif;font-size:14.6px;color:#ffffff;font-weight:400;letter-spacing:0px;white-space:nowrap;line-height:16.308px;transform:scaleY(1.05);transform-origin:0 13.21px;left:764.0px;width:600px;text-align:center;">not available</div>
<svg style="position:absolute;left:41px;top:398px;filter:blur(0.35px);" width="40" height="28" viewBox="0 0 40 28"><rect width="40" height="28" fill="#b87c3c"/>
<rect x="0" y="8" width="1.5" height="20" fill="#e0a868"/><rect x="2.5" y="8" width="1.5" height="20" fill="#7a4c20"/><rect x="5" y="9" width="2" height="19" fill="#e8b070"/><rect x="8" y="9" width="1.2" height="19" fill="#6a4018"/><rect x="10" y="9" width="1.8" height="19" fill="#d89a58"/>
<rect x="12" y="17" width="2" height="11" fill="#e0a868"/><rect x="37" y="6" width="1.5" height="22" fill="#e0b070"/><rect x="34" y="17" width="2" height="5" fill="#d8a060"/>
<path d="M0 0 L14.5 0 L14.5 9 L6 9.2 L0 7z" fill="#dc1a14"/>
<path d="M11 0 L40 0 L40 6 L36 6.8 L28 7 L20 7.2 L14 5z" fill="#8cc4e0"/>
<path d="M15 2 l3 1 l-1 2z M22 1 l4 0.6 l-2 2z M33 1 l4 1 l-2 2z M27 4 l3 0 l-1 2z" fill="#3c78b8"/>
<rect x="15.8" y="4.7" width="11.5" height="11.5" fill="#141a10"/>
<rect x="12" y="9.3" width="3.8" height="7.7" fill="#3aa0c0"/>
<ellipse cx="22.7" cy="7.4" rx="2.8" ry="1.6" fill="#f0f0ee"/>
<rect x="20.4" y="10" width="5" height="6.2" fill="#f0e070"/>
<rect x="14.3" y="17.4" width="3" height="8.4" fill="#2a1a10"/>
<rect x="16.2" y="15" width="7.3" height="10" fill="#c06418"/><rect x="16.2" y="15" width="7.3" height="2.5" fill="#d8b040"/>
<rect x="27.3" y="1.7" width="8.7" height="15.3" rx="2.5" fill="#dfe8d0"/><rect x="27.3" y="5" width="2.2" height="11" fill="#98b080"/><rect x="30" y="0.9" width="3.4" height="2.3" fill="#161616"/>
<ellipse cx="30" cy="24.2" rx="6.5" ry="3.8" fill="#4aa0d8"/><ellipse cx="29.8" cy="24.4" rx="2.9" ry="2.1" fill="#2a1414"/></svg>
<div class="t" style="position:absolute;top:403.49px;font-family:'Liberation Sans', sans-serif;font-size:14.6px;color:#ffffff;font-weight:400;letter-spacing:0px;white-space:nowrap;line-height:16.308px;transform:scaleY(1.05);transform-origin:0 13.21px;right:1264.6px;text-align:right;">6</div>
<div class="t" style="position:absolute;top:403.49px;font-family:'Liberation Sans', sans-serif;font-size:14.6px;color:#ffffff;font-weight:400;letter-spacing:0.1px;white-space:nowrap;line-height:16.308px;transform:scaleY(1.05);transform-origin:0 13.21px;left:216px;">Grandma's Boysenberry Spread</div>
<div class="t" style="position:absolute;top:403.49px;font-family:'Liberation Sans', sans-serif;font-size:14.6px;color:#ffffff;font-weight:400;letter-spacing:0px;white-space:nowrap;line-height:16.308px;transform:scaleY(1.05);transform-origin:0 13.21px;right:935.6px;text-align:right;">3</div>
<div class="t" style="position:absolute;top:403.49px;font-family:'Liberation Sans', sans-serif;font-size:14.6px;color:#ffffff;font-weight:400;letter-spacing:0px;white-space:nowrap;line-height:16.308px;transform:scaleY(1.05);transform-origin:0 13.21px;left:545px;">Condiments</div>
<div class="t" style="position:absolute;top:403.49px;font-family:'Liberation Sans', sans-serif;font-size:14.6px;color:#ffffff;font-weight:400;letter-spacing:0.15px;white-space:nowrap;line-height:16.308px;transform:scaleY(1.05);transform-origin:0 13.21px;left:668px;">12 <span style="display:inline-block;transform:scaleX(1.45) translateY(-0.5px);margin:0 1.1px">-</span> 8 oz jars</div>
<div class="t" style="position:absolute;top:403.49px;font-family:'Liberation Sans', sans-serif;font-size:14.6px;color:#ffffff;font-weight:400;letter-spacing:0px;white-space:nowrap;line-height:16.308px;transform:scaleY(1.05);transform-origin:0 13.21px;right:576.2px;text-align:right;">25</div>
<div class="t" style="position:absolute;top:403.49px;font-family:'Liberation Sans', sans-serif;font-size:14.6px;color:#ffffff;font-weight:400;letter-spacing:0px;white-space:nowrap;line-height:16.308px;transform:scaleY(1.05);transform-origin:0 13.21px;right:465.20000000000005px;text-align:right;">120</div>
<div class="t" style="position:absolute;top:403.49px;font-family:'Liberation Sans', sans-serif;font-size:14.6px;color:#ffffff;font-weight:400;letter-spacing:0px;white-space:nowrap;line-height:16.308px;transform:scaleY(1.05);transform-origin:0 13.21px;left:764.0px;width:600px;text-align:center;">available</div>
<svg style="position:absolute;left:41px;top:438px;filter:blur(0.35px);" width="40" height="28" viewBox="0 0 40 28"><rect width="40" height="28" fill="#b81418"/>
<rect y="0" width="40" height="1.2" fill="#3a2030"/><rect y="4.5" width="20" height="2.2" fill="#200a10"/><rect y="19.5" width="12" height="2.5" fill="#2a1420"/><rect y="22" width="12" height="1.2" fill="#e0e0f0"/>
<rect x="34" y="3.8" width="6" height="13" fill="#c01820"/><rect x="36" y="8" width="4" height="1.5" fill="#f0f0f0"/>
<path d="M25 17 L40 13.5 L40 17 L27 20z" fill="#c8c8e8"/><path d="M26 20 L40 16.5 L40 22 L28 24.5z" fill="#283080"/>
<path d="M26 24 L40 21 L40 28 L28 28z" fill="#1a0c10"/>
<ellipse cx="27.6" cy="8.3" rx="9.8" ry="7.6" fill="#2a70d0"/><ellipse cx="27.4" cy="7.6" rx="9" ry="6.8" fill="#f0b41e"/>
<circle cx="24" cy="5" r="0.9" fill="#904010"/><circle cx="29.5" cy="8.5" r="0.9" fill="#904010"/><circle cx="33" cy="5" r="0.9" fill="#904010"/><circle cx="26" cy="10.5" r="0.9" fill="#904010"/><circle cx="21.5" cy="8.5" r="0.9" fill="#904010"/><circle cx="31" cy="12" r="0.9" fill="#904010"/>
<ellipse cx="9" cy="13.2" rx="8.8" ry="7.5" fill="#b0d8d8"/><ellipse cx="9.2" cy="13.3" rx="7.6" ry="6.4" fill="#204a14"/>
<circle cx="7" cy="10.5" r="2.2" fill="#d4e478"/><circle cx="11.5" cy="15" r="2.3" fill="#bcd468"/><circle cx="5.2" cy="15.5" r="1.8" fill="#9cc050"/><circle cx="12.3" cy="10" r="1.6" fill="#a8cc5c"/>
<path d="M19.3 14.2 L28.5 19.9 L22.3 27.9 L12 21.4z" fill="#58c4b8"/>
<path d="M17.5 16.5 L25.5 21.5 M15 19.5 L23.5 24.5 M19 17 L15.5 22 M23 19.5 L19.5 25" stroke="#1c6a60" stroke-width="0.8"/></svg>
<div class="t" style="position:absolute;top:444.35px;font-family:'Liberation Sans', sans-serif;font-size:14.6px;color:#ffffff;font-weight:400;letter-spacing:0px;white-space:nowrap;line-height:16.308px;transform:scaleY(1.05);transform-origin:0 13.21px;right:1264.6px;text-align:right;">7</div>
<div class="t" style="position:absolute;top:444.35px;font-family:'Liberation Sans', sans-serif;font-size:14.6px;color:#ffffff;font-weight:400;letter-spacing:0.1px;white-space:nowrap;line-height:16.308px;transform:scaleY(1.05);transform-origin:0 13.21px;left:216px;">Uncle Bob's Organic Dried Pears</div>
<div class="t" style="position:absolute;top:444.35px;font-family:'Liberation Sans', sans-serif;font-size:14.6px;color:#ffffff;font-weight:400;letter-spacing:0px;white-space:nowrap;line-height:16.308px;transform:scaleY(1.05);transform-origin:0 13.21px;right:935.6px;text-align:right;">3</div>
<div class="t" style="position:absolute;top:444.35px;font-family:'Liberation Sans', sans-serif;font-size:14.6px;color:#ffffff;font-weight:400;letter-spacing:0px;white-space:nowrap;line-height:16.308px;transform:scaleY(1.05);transform-origin:0 13.21px;left:545px;">Produce</div>
<div class="t" style="position:absolute;top:444.35px;font-family:'Liberation Sans', sans-serif;font-size:14.6px;color:#ffffff;font-weight:400;letter-spacing:0.15px;white-space:nowrap;line-height:16.308px;transform:scaleY(1.05);transform-origin:0 13.21px;left:668px;">12 <span style="display:inline-block;transform:scaleX(1.45) translateY(-0.5px);margin:0 1.1px">-</span> 1 lb pkgs.</div>
<div class="t" style="position:absolute;top:444.35px;font-family:'Liberation Sans', sans-serif;font-size:14.6px;color:#ffffff;font-weight:400;letter-spacing:0px;white-space:nowrap;line-height:16.308px;transform:scaleY(1.05);transform-origin:0 13.21px;right:576.2px;text-align:right;">30</div>
<div class="t" style="position:absolute;top:444.35px;font-family:'Liberation Sans', sans-serif;font-size:14.6px;color:#ffffff;font-weight:400;letter-spacing:0px;white-space:nowrap;line-height:16.308px;transform:scaleY(1.05);transform-origin:0 13.21px;right:465.20000000000005px;text-align:right;">15</div>
<div class="t" style="position:absolute;top:444.35px;font-family:'Liberation Sans', sans-serif;font-size:14.6px;color:#ffffff;font-weight:400;letter-spacing:0px;white-space:nowrap;line-height:16.308px;transform:scaleY(1.05);transform-origin:0 13.21px;left:764.0px;width:600px;text-align:center;">available</div>
<svg style="position:absolute;left:41px;top:479px;filter:blur(0.35px);" width="40" height="28" viewBox="0 0 40 28"><rect width="40" height="28" fill="#b87c3c"/>
<rect x="0" y="8" width="1.5" height="20" fill="#e0a868"/><rect x="2.5" y="8" width="1.5" height="20" fill="#7a4c20"/><rect x="5" y="9" width="2" height="19" fill="#e8b070"/><rect x="8" y="9" width="1.2" height="19" fill="#6a4018"/><rect x="10" y="9" width="1.8" height="19" fill="#d89a58"/>
<rect x="12" y="17" width="2" height="11" fill="#e0a868"/><rect x="37" y="6" width="1.5" height="22" fill="#e0b070"/><rect x="34" y="17" width="2" height="5" fill="#d8a060"/>
<path d="M0 0 L14.5 0 L14.5 9 L6 9.2 L0 7z" fill="#dc1a14"/>
<path d="M11 0 L40 0 L40 6 L36 6.8 L28 7 L20 7.2 L14 5z" fill="#8cc4e0"/>
<path d="M15 2 l3 1 l-1 2z M22 1 l4 0.6 l-2 2z M33 1 l4 1 l-2 2z M27 4 l3 0 l-1 2z" fill="#3c78b8"/>
<rect x="15.8" y="4.7" width="11.5" height="11.5" fill="#141a10"/>
<rect x="12" y="9.3" width="3.8" height="7.7" fill="#3aa0c0"/>
<ellipse cx="22.7" cy="7.4" rx="2.8" ry="1.6" fill="#f0f0ee"/>
<rect x="20.4" y="10" width="5" height="6.2" fill="#f0e070"/>
<rect x="14.3" y="17.4" width="3" height="8.4" fill="#2a1a10"/>
<rect x="16.2" y="15" width="7.3" height="10" fill="#c06418"/><rect x="16.2" y="15" width="7.3" height="2.5" fill="#d8b040"/>
<rect x="27.3" y="1.7" width="8.7" height="15.3" rx="2.5" fill="#dfe8d0"/><rect x="27.3" y="5" width="2.2" height="11" fill="#98b080"/><rect x="30" y="0.9" width="3.4" height="2.3" fill="#161616"/>
<ellipse cx="30" cy="24.2" rx="6.5" ry="3.8" fill="#4aa0d8"/><ellipse cx="29.8" cy="24.4" rx="2.9" ry="2.1" fill="#2a1414"/></svg>
<div class="t" style="position:absolute;top:485.21px;font-family:'Liberation Sans', sans-serif;font-size:14.6px;color:#ffffff;font-weight:400;letter-spacing:0px;white-space:nowrap;line-height:16.308px;transform:scaleY(1.05);transform-origin:0 13.21px;right:1264.6px;text-align:right;">8</div>
<div class="t" style="position:absolute;top:485.21px;font-family:'Liberation Sans', sans-serif;font-size:14.6px;color:#ffffff;font-weight:400;letter-spacing:0.1px;white-space:nowrap;line-height:16.308px;transform:scaleY(1.05);transform-origin:0 13.21px;left:216px;">Northwoods Cranberry Sauce</div>
<div class="t" style="position:absolute;top:485.21px;font-family:'Liberation Sans', sans-serif;font-size:14.6px;color:#ffffff;font-weight:400;letter-spacing:0px;white-space:nowrap;line-height:16.308px;transform:scaleY(1.05);transform-origin:0 13.21px;right:935.6px;text-align:right;">3</div>
<div class="t" style="position:absolute;top:485.21px;font-family:'Liberation Sans', sans-serif;font-size:14.6px;color:#ffffff;font-weight:400;letter-spacing:0px;white-space:nowrap;line-height:16.308px;transform:scaleY(1.05);transform-origin:0 13.21px;left:545px;">Condiments</div>
<div class="t" style="position:absolute;top:485.21px;font-family:'Liberation Sans', sans-serif;font-size:14.6px;color:#ffffff;font-weight:400;letter-spacing:0.15px;white-space:nowrap;line-height:16.308px;transform:scaleY(1.05);transform-origin:0 13.21px;left:668px;">12 <span style="display:inline-block;transform:scaleX(1.45) translateY(-0.5px);margin:0 1.1px">-</span> 12 oz jars</div>
<div class="t" style="position:absolute;top:485.21px;font-family:'Liberation Sans', sans-serif;font-size:14.6px;color:#ffffff;font-weight:400;letter-spacing:0px;white-space:nowrap;line-height:16.308px;transform:scaleY(1.05);transform-origin:0 13.21px;right:576.2px;text-align:right;">40</div>
<div class="t" style="position:absolute;top:485.21px;font-family:'Liberation Sans', sans-serif;font-size:14.6px;color:#ffffff;font-weight:400;letter-spacing:0px;white-space:nowrap;line-height:16.308px;transform:scaleY(1.05);transform-origin:0 13.21px;right:465.20000000000005px;text-align:right;">6</div>
<div class="t" style="position:absolute;top:485.21px;font-family:'Liberation Sans', sans-serif;font-size:14.6px;color:#ffffff;font-weight:400;letter-spacing:0px;white-space:nowrap;line-height:16.308px;transform:scaleY(1.05);transform-origin:0 13.21px;left:764.0px;width:600px;text-align:center;">available</div>
<svg style="position:absolute;left:41px;top:520px;filter:blur(0.35px);" width="40" height="28" viewBox="0 0 40 28"><rect width="40" height="28" fill="#301016"/>
<rect y="0" width="40" height="2" fill="#5a1a20"/><rect y="12" width="10" height="7" fill="#c01820"/><rect y="19" width="10" height="2" fill="#e0e0f0"/><rect y="21" width="10" height="2.5" fill="#2a3a88"/>
<rect x="32" y="20" width="8" height="8" fill="#c41820"/><rect x="34" y="7" width="6" height="7" fill="#a01418"/>
<circle cx="10.5" cy="4" r="3.8" fill="#d8a030"/><circle cx="7.5" cy="10" r="3.2" fill="#78c4d8"/><rect x="10" y="5.5" width="5" height="5" fill="#2a6a24"/>
<ellipse cx="23.5" cy="5" rx="5" ry="3.2" fill="#70704a"/>
<ellipse cx="32" cy="10" rx="6.2" ry="3.2" fill="#e8e8a4"/>
<ellipse cx="20.5" cy="18.5" rx="11" ry="8.8" fill="#c4e6dc"/><ellipse cx="21" cy="19" rx="8.5" ry="6.8" fill="#625838"/>
<circle cx="18" cy="18" r="3" fill="#7a6a48"/><circle cx="24" cy="20" r="3" fill="#7a6848"/>
<rect x="21" y="10.5" width="3.5" height="3.5" fill="#3aa030"/>
<path d="M35 15.5 L37.5 17 L30 27.5 L28 26.5z" fill="#5aa05a"/></svg>
<div class="t" style="position:absolute;top:526.07px;font-family:'Liberation Sans', sans-serif;font-size:14.6px;color:#ffffff;font-weight:400;letter-spacing:0px;white-space:nowrap;line-height:16.308px;transform:scaleY(1.05);transform-origin:0 13.21px;right:1264.6px;text-align:right;">9</div>
<div class="t" style="position:absolute;top:526.07px;font-family:'Liberation Sans', sans-serif;font-size:14.6px;color:#ffffff;font-weight:400;letter-spacing:0.1px;white-space:nowrap;line-height:16.308px;transform:scaleY(1.05);transform-origin:0 13.21px;left:216px;">Mishi Kobe Niku</div>
<div class="t" style="position:absolute;top:526.07px;font-family:'Liberation Sans', sans-serif;font-size:14.6px;color:#ffffff;font-weight:400;letter-spacing:0px;white-space:nowrap;line-height:16.308px;transform:scaleY(1.05);transform-origin:0 13.21px;right:935.6px;text-align:right;">4</div>
<div class="t" style="position:absolute;top:526.07px;font-family:'Liberation Sans', sans-serif;font-size:14.6px;color:#ffffff;font-weight:400;letter-spacing:0px;white-space:nowrap;line-height:16.308px;transform:scaleY(1.05);transform-origin:0 13.21px;left:545px;">Meat/Poultry</div>
<div class="t" style="position:absolute;top:526.07px;font-family:'Liberation Sans', sans-serif;font-size:14.6px;color:#ffffff;font-weight:400;letter-spacing:0.15px;white-space:nowrap;line-height:16.308px;transform:scaleY(1.05);transform-origin:0 13.21px;left:668px;">18 <span style="display:inline-block;transform:scaleX(1.45) translateY(-0.5px);margin:0 1.1px">-</span> 500 g pkgs.</div>
<div class="t" style="position:absolute;top:526.07px;font-family:'Liberation Sans', sans-serif;font-size:14.6px;color:#ffffff;font-weight:400;letter-spacing:0px;white-space:nowrap;line-height:16.308px;transform:scaleY(1.05);transform-origin:0 13.21px;right:576.2px;text-align:right;">97</div>
<div class="t" style="position:absolute;top:526.07px;font-family:'Liberation Sans', sans-serif;font-size:14.6px;color:#ffffff;font-weight:400;letter-spacing:0px;white-space:nowrap;line-height:16.308px;transform:scaleY(1.05);transform-origin:0 13.21px;right:465.20000000000005px;text-align:right;">29</div>
<div class="t" style="position:absolute;top:526.07px;font-family:'Liberation Sans', sans-serif;font-size:14.6px;color:#ffffff;font-weight:400;letter-spacing:0px;white-space:nowrap;line-height:16.308px;transform:scaleY(1.05);transform-origin:0 13.21px;left:764.0px;width:600px;text-align:center;">not available</div>
<svg style="position:absolute;left:41px;top:561px;filter:blur(0.35px);" width="40" height="28" viewBox="0 0 40 28"><rect width="40" height="28" fill="#d8b08a"/>
<rect x="1" y="0" width="2" height="28" fill="#f0d8bc"/><rect x="5" y="12" width="1.5" height="16" fill="#b08058"/><rect x="8" y="18" width="2" height="10" fill="#f4e0c8"/><rect x="34" y="14" width="2" height="14" fill="#f0d4b4"/><rect x="38" y="0" width="2" height="28" fill="#e8c8a8"/>
<ellipse cx="9" cy="6.4" rx="6.4" ry="4.8" fill="#2a3a58"/><ellipse cx="8.8" cy="6" rx="5.8" ry="4.2" fill="#3c88d8"/><path d="M6.5 8 L11.5 4" stroke="#e8e0d0" stroke-width="0.9"/>
<rect x="15" y="1.5" width="6.5" height="8.5" fill="#302018"/><circle cx="18" cy="8" r="1.5" fill="#4a6a4a"/>
<rect x="23.3" y="4" width="4.2" height="6.5" fill="#efe6cc"/>
<ellipse cx="31.5" cy="5.8" rx="4.6" ry="3.4" fill="#8cc0e0"/><path d="M27.5 7 L35.5 7 L35 11 L28 11z" fill="#2050b0"/>
<ellipse cx="34.5" cy="14.5" rx="3" ry="1.8" fill="#c02828"/><circle cx="36.5" cy="10.5" r="2" fill="#3a6a48"/>
<ellipse cx="22" cy="19" rx="13.4" ry="8" fill="#4a94e0"/><ellipse cx="21.5" cy="18.5" rx="11" ry="6.2" fill="#e6f0f8"/><ellipse cx="19" cy="17.2" rx="7" ry="4.6" fill="#cc6024"/>
<ellipse cx="27" cy="21" rx="5.5" ry="2.6" fill="#eca844"/><circle cx="25" cy="21" r="1" fill="#6a2020"/><circle cx="29" cy="20.5" r="1" fill="#6a2020"/></svg>
<div class="t" style="position:absolute;top:566.93px;font-family:'Liberation Sans', sans-serif;font-size:14.6px;color:#ffffff;font-weight:400;letter-spacing:0px;white-space:nowrap;line-height:16.308px;transform:scaleY(1.05);transform-origin:0 13.21px;right:1264.6px;text-align:right;">10</div>
<div class="t" style="position:absolute;top:566.93px;font-family:'Liberation Sans', sans-serif;font-size:14.6px;color:#ffffff;font-weight:400;letter-spacing:0.1px;white-space:nowrap;line-height:16.308px;transform:scaleY(1.05);transform-origin:0 13.21px;left:216px;">Ikura</div>
<div class="t" style="position:absolute;top:566.93px;font-family:'Liberation Sans', sans-serif;font-size:14.6px;color:#ffffff;font-weight:400;letter-spacing:0px;white-space:nowrap;line-height:16.308px;transform:scaleY(1.05);transform-origin:0 13.21px;right:935.6px;text-align:right;">4</div>
<div class="t" style="position:absolute;top:566.93px;font-family:'Liberation Sans', sans-serif;font-size:14.6px;color:#ffffff;font-weight:400;letter-spacing:0px;white-space:nowrap;line-height:16.308px;transform:scaleY(1.05);transform-origin:0 13.21px;left:545px;">Seafood</div>
<div class="t" style="position:absolute;top:566.93px;font-family:'Liberation Sans', sans-serif;font-size:14.6px;color:#ffffff;font-weight:400;letter-spacing:0.15px;white-space:nowrap;line-height:16.308px;transform:scaleY(1.05);transform-origin:0 13.21px;left:668px;">12 <span style="display:inline-block;transform:scaleX(1.45) translateY(-0.5px);margin:0 1.1px">-</span> 200 ml jars</div>
<div class="t" style="position:absolute;top:566.93px;font-family:'Liberation Sans', sans-serif;font-size:14.6px;color:#ffffff;font-weight:400;letter-spacing:0px;white-space:nowrap;line-height:16.308px;transform:scaleY(1.05);transform-origin:0 13.21px;right:576.2px;text-align:right;">31</div>
<div class="t" style="position:absolute;top:566.93px;font-family:'Liberation Sans', sans-serif;font-size:14.6px;color:#ffffff;font-weight:400;letter-spacing:0px;white-space:nowrap;line-height:16.308px;transform:scaleY(1.05);transform-origin:0 13.21px;right:465.20000000000005px;text-align:right;">31</div>
<div class="t" style="position:absolute;top:566.93px;font-family:'Liberation Sans', sans-serif;font-size:14.6px;color:#ffffff;font-weight:400;letter-spacing:0px;white-space:nowrap;line-height:16.308px;transform:scaleY(1.05);transform-origin:0 13.21px;left:764.0px;width:600px;text-align:center;">available</div>
<div style="position:absolute;left:41px;top:607px;width:30px;height:26px;background:#1f2937;box-sizing:border-box;border:1px solid #374151;border-radius:4px;"></div>
<div style="position:absolute;left:74px;top:607px;width:30px;height:26px;background:#1f2937;box-sizing:border-box;border:1px solid #374151;border-radius:4px;"></div>
<div style="position:absolute;left:112px;top:607px;width:32px;height:26px;background:#1f2937;box-sizing:border-box;border:1px solid #22c55e;border-radius:2px;"></div>
<div style="position:absolute;left:152px;top:607px;width:30px;height:26px;background:#1f2937;box-sizing:border-box;border:1px solid #6b7280;border-radius:4px;"></div>
<div style="position:absolute;left:186px;top:607px;width:30px;height:26px;background:#1f2937;box-sizing:border-box;border:1px solid #6b7280;border-radius:4px;"></div>
<svg style="position:absolute;left:51px;top:613px;" width="10" height="10" viewBox="0 0 10 10"><path d="M5.2 2.6 L2.6 5.1 L5.2 7.6 M8.5 2.6 L5.9 5.1 L8.5 7.6" stroke="#5d6674" fill="none" stroke-width="1.3" stroke-linecap="round" stroke-linejoin="round"/></svg>
<svg style="position:absolute;left:84px;top:613px;" width="10" height="10" viewBox="0 0 10 10"><path d="M6.4 1.6 L3.6 5 L6.4 8.4" stroke="#5d6674" fill="none" stroke-width="1.3" stroke-linecap="round" stroke-linejoin="round"/></svg>
<svg style="position:absolute;left:162px;top:613px;" width="10" height="10" viewBox="0 0 10 10"><path d="M3.7 1.6 L6.5 5 L3.7 8.4" stroke="#ffffff" fill="none" stroke-width="1.3" stroke-linecap="round" stroke-linejoin="round"/></svg>
<svg style="position:absolute;left:196px;top:613px;" width="10" height="10" viewBox="0 0 10 10"><path d="M1.8 2.6 L4.4 5.1 L1.8 7.6 M5.2 2.6 L7.8 5.1 L5.2 7.6" stroke="#ffffff" fill="none" stroke-width="1.3" stroke-linecap="round" stroke-linejoin="round"/></svg>
<div class="t" style="position:absolute;top:612.58px;font-family:'Liberation Sans', sans-serif;font-size:13.5px;color:#ffffff;font-weight:400;letter-spacing:0px;white-space:nowrap;line-height:15.079px;-webkit-text-stroke:0;left:119.5px;">1</div>
<div class="t" style="position:absolute;top:613.14px;font-family:'Liberation Sans', sans-serif;font-size:12px;color:#9ca3af;font-weight:400;letter-spacing:-0.05px;white-space:nowrap;line-height:13.404px;-webkit-text-stroke:0;left:224.3px;">Page count</div>
<div style="position:absolute;left:287px;top:605px;width:32px;height:30px;background:#1f2937;box-sizing:border-box;border:1px solid #6b7280;border-radius:5px;"></div>
<div class="t" style="position:absolute;top:612.28px;font-family:'Liberation Sans', sans-serif;font-size:14.5px;color:#ffffff;font-weight:400;letter-spacing:0px;white-space:nowrap;line-height:16.197px;-webkit-text-stroke:0;left:4.199999999999989px;width:600px;text-align:center;">8</div>
<div class="t" style="position:absolute;top:613.14px;font-family:'Liberation Sans', sans-serif;font-size:12px;color:#9ca3af;font-weight:400;letter-spacing:0.25px;white-space:nowrap;line-height:13.404px;-webkit-text-stroke:0;left:330.2px;">Item count</div>
<div style="position:absolute;left:391px;top:605px;width:32px;height:30px;background:#1f2937;box-sizing:border-box;border:1px solid #6b7280;border-radius:5px;"></div>
<div class="t" style="position:absolute;top:612.28px;font-family:'Liberation Sans', sans-serif;font-size:14.5px;color:#ffffff;font-weight:400;letter-spacing:0px;white-space:nowrap;line-height:16.197px;-webkit-text-stroke:0;right:1043px;text-align:right;">77</div>
<div class="t" style="position:absolute;top:613.14px;font-family:'Liberation Sans', sans-serif;font-size:12px;color:#9ca3af;font-weight:400;letter-spacing:-0.12px;white-space:nowrap;line-height:13.404px;-webkit-text-stroke:0;left:431.6px;">Items per page</div>
<div style="position:absolute;left:513px;top:607px;width:56px;height:26px;background:#1f2937;box-sizing:border-box;border:1px solid #6b7280;border-radius:2px;"></div>
<div class="t" style="position:absolute;top:614.05px;font-family:'Liberation Sans', sans-serif;font-size:13.2px;color:#ffffff;font-weight:400;letter-spacing:0px;white-space:nowrap;line-height:14.744px;-webkit-text-stroke:0;left:521.5px;">10</div>
<svg style="position:absolute;left:547px;top:615px;" width="12" height="10" viewBox="0 0 12 10"><path d="M1.8 2.8 L5.6 6.6 L9.4 2.8" stroke="#ffffff" fill="none" stroke-width="1.5" stroke-linecap="round" stroke-linejoin="round"/></svg>
</div>
</body></html>
